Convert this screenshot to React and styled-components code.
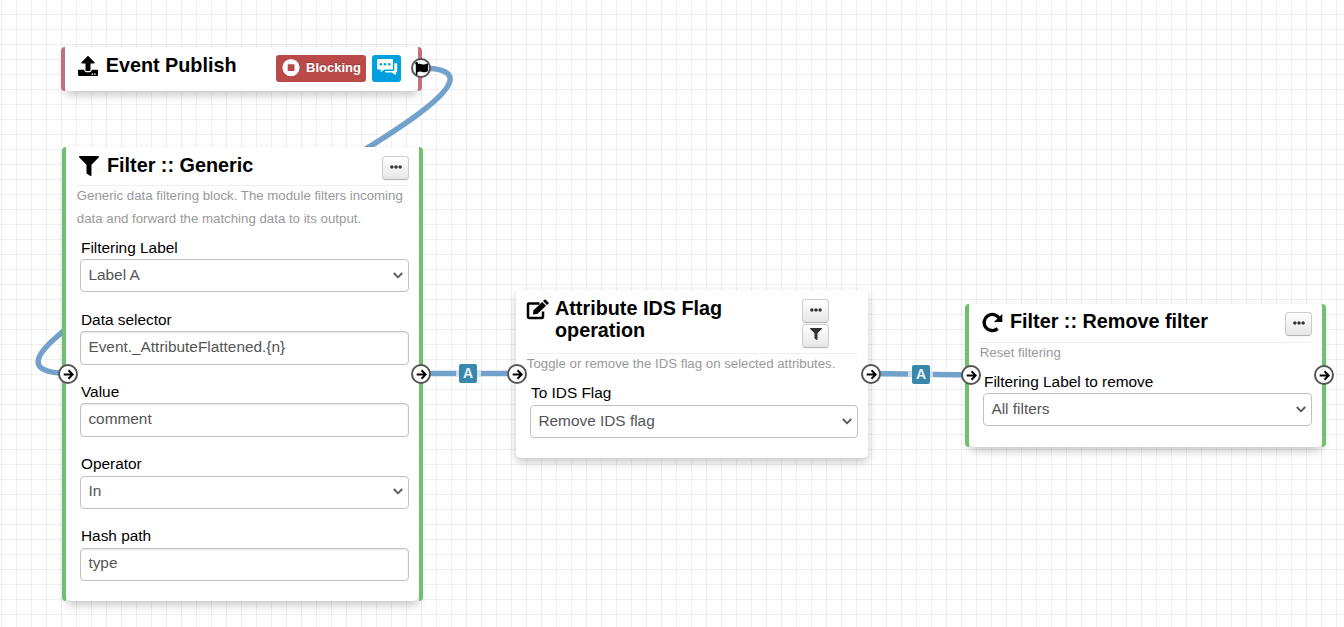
import React from "react";
import styled, { createGlobalStyle } from "styled-components";
import { FaUpload, FaFilter, FaEllipsisH, FaFlag } from "react-icons/fa";

const GlobalStyle = createGlobalStyle`
  * { box-sizing: border-box; }
  body { margin: 0; overflow: hidden; font-family: "Liberation Sans", Arial, sans-serif; color: #000; }
`;

const Canvas = styled.main`
  position: relative;
  width: 1344px;
  height: 627px;
  overflow: hidden;
  background-color: #fff;
  background-image:
    linear-gradient(to right, rgba(0, 0, 0, 0.06) 1px, transparent 1px),
    linear-gradient(to bottom, rgba(0, 0, 0, 0.06) 1px, transparent 1px);
  background-size: 15px 15px;
  background-position: 1px 14px;
`;

const Wires = styled.svg`
  position: absolute;
  inset: 0;
`;

const Node = styled.section`
  position: absolute;
  isolation: isolate;
  left: ${(p) => p.$x}px;
  top: ${(p) => p.$y}px;
  width: ${(p) => p.$w}px;
  height: ${(p) => p.$h}px;
  display: flex;
`;

const Rail = styled.span`
  position: relative;
  z-index: 1;
  flex: 0 0 4px;
  background: ${(p) => p.$color};
  border-radius: ${(p) => (p.$end ? "0 4px 4px 0" : "4px 0 0 4px")};
`;

const Body = styled.div`
  flex: 1;
  min-width: 0;
  padding: 0 10px;
  background: #fff;
  border-radius: 5px;
  box-shadow: 0 4px 10px rgba(0, 0, 0, 0.22);
`;

const Header = styled.header`
  display: flex;
  align-items: flex-start;
  height: ${(p) => p.$h}px;
  border-bottom: ${(p) => (p.$plain ? "0" : "1px solid #eee")};
`;

const HeaderIcon = styled.span`
  display: flex;
  flex: 0 0 ${(p) => p.$w}px;
  padding: ${(p) => p.$top}px 0 0 ${(p) => p.$left || 0}px;
`;

const Title = styled.h1`
  flex: 1;
  margin: 0;
  padding-top: ${(p) => p.$top}px;
  font-size: 19.8px;
  line-height: 22px;
  font-weight: 700;
  white-space: pre-line;
`;

const Actions = styled.div`
  display: flex;
  flex-direction: column;
  gap: 0.5px;
  padding: ${(p) => p.$top}px ${(p) => p.$right || 0}px 0 0;
`;

const SmallButton = styled.button`
  display: flex;
  align-items: center;
  justify-content: center;
  width: 27px;
  height: 24px;
  padding: 0 0 3px 1px;
  color: #333;
  background: linear-gradient(#fff, #e6e6e6);
  border: 1px solid #ccc;
  border-bottom-color: #b3b3b3;
  border-radius: 4px;
  box-shadow: 0 1px 2px rgba(0, 0, 0, 0.05);
`;

const Badges = styled.div`
  display: flex;
  gap: 6px;
  padding: 8px 7px 0 0;
`;

const Badge = styled.span`
  display: flex;
  align-items: center;
  gap: 6px;
  width: ${(p) => p.$w}px;
  height: 27px;
  padding: 0 0 2px ${(p) => p.$left}px;
  color: #fff;
  background: ${(p) => p.$bg};
  border-radius: 3px;
  font-size: 13px;
  font-weight: 700;
  line-height: 16px;
  text-shadow: 0 -1px 0 rgba(0, 0, 0, 0.25);

  svg { flex: none; }
`;

const Description = styled.p`
  margin: -2px 0 0;
  padding-left: 0.8px;
  font-size: 13.25px;
  line-height: 23px;
  color: #999;
  white-space: pre;
`;

const Fields = styled.div`
  padding-left: ${(p) => p.$left}px;
  padding-top: ${(p) => p.$top}px;
`;

const Field = styled.div`
  height: 72.15px;
`;

const Label = styled.div`
  height: 22.3px;
  padding-left: 1px;
  font-size: 15.4px;
  line-height: ${(p) => (p.$tight ? 20 : 22)}px;
  white-space: nowrap;
`;

const Control = styled.div`
  display: flex;
  align-items: center;
  justify-content: space-between;
  height: 33.3px;
  padding: 0 5px 2.4px 7.4px;
  color: #555;
  background: #fff;
  border: 1px solid #c2c2c2;
  border-radius: 4px;
  box-shadow: ${(p) => (p.$inset ? "inset 0 1px 2px rgba(0, 0, 0, 0.1)" : "none")};
  font-size: 15.4px;
  line-height: 20px;
`;

const Chevron = styled.svg`
  margin-top: 2px;
`;

const Port = styled.span`
  position: absolute;
  left: ${(p) => p.$x - 10}px;
  top: ${(p) => p.$y - 10}px;
  display: flex;
  align-items: center;
  justify-content: center;
  width: 20px;
  height: 20px;
  padding-left: 1px;
  color: #000;
  background: #fff;
  border: 2px solid #555;
  border-radius: 50%;
`;

const WireLabel = styled.span`
  position: absolute;
  left: ${(p) => p.$x}px;
  top: ${(p) => p.$y}px;
  width: 18px;
  height: 19px;
  color: #eaf3f7;
  background: #3a87ad;
  border-radius: 2px;
  font-size: 14px;
  font-weight: 700;
  line-height: 18px;
  text-align: center;
`;

const GREEN = "#6fc16d";
const ROSE = "#c46f7d";

function Select({ label, value, tight }) {
  return (
    <Field>
      <Label $tight={tight}>{label}</Label>
      <Control>
        {value}
        <Chevron width="10" height="7" viewBox="0 0 10 7">
          <path d="M0.8 1 L5 5.3 L9.2 1" fill="none" stroke="#555" strokeWidth="1.8" />
        </Chevron>
      </Control>
    </Field>
  );
}

function TextInput({ label, value }) {
  return (
    <Field>
      <Label>{label}</Label>
      <Control $inset>{value}</Control>
    </Field>
  );
}

function CommentsIcon() {
  return (
    <svg width="21" height="17" viewBox="0 0 21 17" fill="#fff">
      <path d="M1.4 0H14.8A1.2 1.2 0 0 1 16 1.2V9.4A1.2 1.2 0 0 1 14.8 10.6H7.4L3.8 13.2V10.6H1.4A1.2 1.2 0 0 1 .2 9.4V1.2A1.2 1.2 0 0 1 1.4 0Z" />
      <path d="M17.3 4.2H19A1.2 1.2 0 0 1 20.2 5.4V12.3A1.2 1.2 0 0 1 19 13.5H18.8V16.2L14.8 13.5H9.2A1.2 1.2 0 0 1 8 12.3V11.9H15.8A1.5 1.5 0 0 0 17.3 10.4Z" />
      <g fill="#00a0df">
        <circle cx="3.9" cy="5.2" r="1.2" />
        <circle cx="8.1" cy="5.2" r="1.2" />
        <circle cx="12.3" cy="5.2" r="1.2" />
      </g>
    </svg>
  );
}

function StopIcon() {
  return (
    <svg width="18" height="18" viewBox="0 0 18 18">
      <circle cx="9" cy="8.6" r="8.6" fill="#fff" />
      <rect x="5.7" y="5.2" width="6.8" height="6.8" rx="0.6" fill="#b94a48" />
    </svg>
  );
}

function EditIcon() {
  return (
    <svg width="24" height="21" viewBox="0 0 24 21">
      <path d="M13.5 4.4H2.9Q2 4.4 2 5.3V18.1Q2 19 2.9 19H16.1Q17 19 17 18.1V12.5" fill="none" stroke="#000" strokeWidth="2.5" />
      <path d="M6.9 15.4L7.5 11.3L16.2 2.9L20 6.7L11.4 15Z" />
      <path d="M17 2.1L18.3 .8Q19 .2 19.7 .8L22.5 3.5Q23.1 4.2 22.5 4.8L20.9 6Z" />
    </svg>
  );
}

function RedoIcon() {
  return (
    <svg width="21" height="21" viewBox="0 0 21 21">
      <path d="M17.2 6.3A8.1 8.1 0 1 0 15.6 16.6" fill="none" stroke="#000" strokeWidth="3.4" />
      <path d="M20.3 1.9V9.9H11.9Z" />
    </svg>
  );
}

function ArrowIcon() {
  return (
    <svg width="11" height="11" viewBox="0 0 12 12" fill="none" stroke="#000" strokeWidth="2.1">
      <path d="M0.8 6H10.4M6 1.4L10.6 6L6 10.6" />
    </svg>
  );
}

export default function App() {
  return (
    <>
      <GlobalStyle />
      <Canvas>
        <Wires width="1344" height="627" fill="none" stroke="#72a2cb" strokeWidth="5.4">
          <path d="M421 68 C 600 69, -111 370, 67 373.5" />
          <path d="M421 373.5 H517" />
          <path d="M871 373.5 L971 375" />
          <path d="M456 373.5 H481" stroke="#d3e2ef" />
          <path d="M908 374 L933 374.4" stroke="#d3e2ef" />
        </Wires>

        <Node $x={61} $y={47} $w={361} $h={43.5}>
          <Rail $color={ROSE} />
          <Body>
            <Header $h={43} $plain>
              <HeaderIcon $w={30.7} $top={9} $left={3}><FaUpload size={20} /></HeaderIcon>
              <Title $top={7}>Event Publish</Title>
              <Badges>
                <Badge $w={90} $left={6} $bg="#b94a48"><StopIcon />Blocking</Badge>
                <Badge $w={29} $left={4.5} $bg="#00a0df" aria-label="Comments"><CommentsIcon /></Badge>
              </Badges>
            </Header>
          </Body>
          <Rail $color={ROSE} $end />
        </Node>

        <Node $x={62} $y={147} $w={361} $h={454}>
          <Rail $color={GREEN} />
          <Body>
            <Header $h={39}>
              <HeaderIcon $w={31} $top={9} $left={3}><FaFilter size={20} /></HeaderIcon>
              <Title $top={7}>Filter :: Generic</Title>
              <Actions $top={9}><SmallButton><FaEllipsisH size={12} /></SmallButton></Actions>
            </Header>
            <Description>{"Generic data filtering block. The module filters incoming\ndata and forward the matching data to its output."}</Description>
            <Fields $left={4} $top={6.8}>
              <Select label="Filtering Label" value="Label A" />
              <TextInput label="Data selector" value="Event._AttributeFlattened.{n}" />
              <TextInput label="Value" value="comment" />
              <Select label="Operator" value="In" />
              <TextInput label="Hash path" value="type" />
            </Fields>
          </Body>
          <Rail $color={GREEN} $end />
        </Node>

        <Node $x={516} $y={290} $w={352} $h={168}>
          <Body>
            <Header $h={64}>
              <HeaderIcon $w={29} $top={9}><EditIcon /></HeaderIcon>
              <Title $top={7}>{"Attribute IDS Flag\noperation"}</Title>
              <Actions $top={9} $right={29}>
                <SmallButton><FaEllipsisH size={12} /></SmallButton>
                <SmallButton><FaFilter size={12} /></SmallButton>
              </Actions>
            </Header>
            <Description>Toggle or remove the IDS flag on selected attributes.</Description>
            <Fields $left={4} $top={7.8}>
              <Select tight label="To IDS Flag" value="Remove IDS flag" />
            </Fields>
          </Body>
        </Node>

        <Node $x={965} $y={304} $w={361} $h={143}>
          <Rail $color={GREEN} />
          <Body>
            <Header $h={39}>
              <HeaderIcon $w={31} $top={8} $left={3}><RedoIcon /></HeaderIcon>
              <Title $top={6}>Filter :: Remove filter</Title>
              <Actions $top={8}><SmallButton><FaEllipsisH size={12} /></SmallButton></Actions>
            </Header>
            <Description>Reset filtering</Description>
            <Fields $left={4} $top={6.8}>
              <Select label="Filtering Label to remove" value="All filters" />
            </Fields>
          </Body>
          <Rail $color={GREEN} $end />
        </Node>

        <WireLabel $x={459} $y={364}>A</WireLabel>
        <WireLabel $x={912} $y={365}>A</WireLabel>

        <Port $x={421} $y={68}><FaFlag size={13} /></Port>
        <Port $x={68} $y={374}><ArrowIcon /></Port>
        <Port $x={421} $y={374}><ArrowIcon /></Port>
        <Port $x={517} $y={374}><ArrowIcon /></Port>
        <Port $x={871} $y={374}><ArrowIcon /></Port>
        <Port $x={971} $y={375}><ArrowIcon /></Port>
        <Port $x={1324} $y={375}><ArrowIcon /></Port>
      </Canvas>
    </>
  );
}
